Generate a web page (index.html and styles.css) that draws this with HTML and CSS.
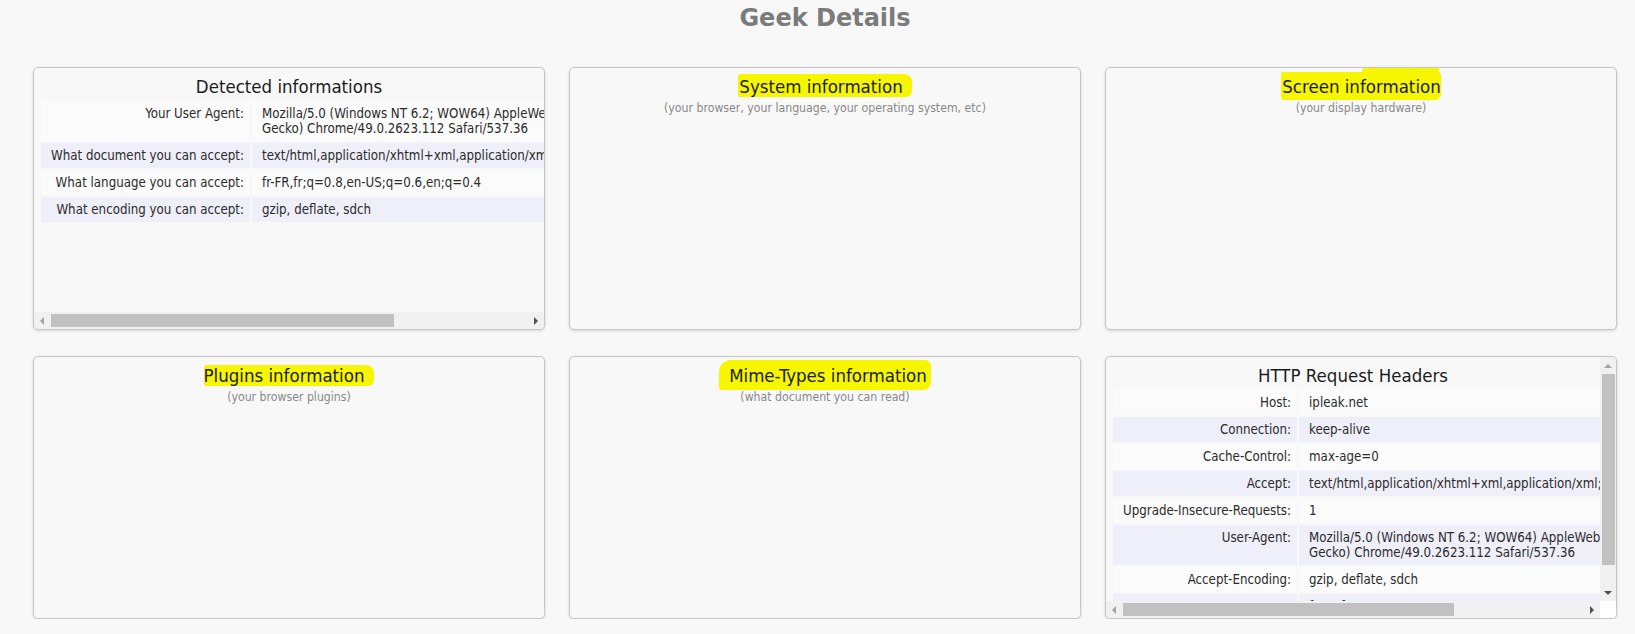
FILE: index.html
```html
<!DOCTYPE html>
<html lang="en">
<head>
<meta charset="utf-8">
<title>Geek Details</title>
<link rel="stylesheet" href="styles.css">
</head>
<body>
<div class="page">
  <h1 class="page-title">Geek Details</h1>
  <div class="grid">

    <section class="card card--hscroll">
      <div class="card-body">
        <h2 class="card-title">Detected informations</h2>
        <table class="info">
          <tr><th>Your User Agent:</th><td>Mozilla/5.0 (Windows NT 6.2; WOW64) AppleWebKit/537.36 (KHTML, like Gecko) Chrome/49.0.2623.112 Safari/537.36</td></tr>
          <tr><th>What document you can accept:</th><td>text/html,application/xhtml+xml,application/xml;q=0.9,image/webp,*/*;q=0.8</td></tr>
          <tr><th>What language you can accept:</th><td>fr-FR,fr;q=0.8,en-US;q=0.6,en;q=0.4</td></tr>
          <tr><th>What encoding you can accept:</th><td>gzip, deflate, sdch</td></tr>
        </table>
      </div>
      <div class="hscroll">
        <span class="sb-btn"><span class="arrow arrow-left"></span></span>
        <div class="sb-track"><div class="sb-thumb sb-thumb--h" style="width:72%"></div></div>
        <span class="sb-btn"><span class="arrow arrow-right"></span></span>
      </div>
    </section>

    <section class="card">
      <div class="card-body">
        <h2 class="card-title"><span class="hl hl-system">System information</span></h2>
        <p class="card-sub">(your browser, your language, your operating system, etc)</p>
      </div>
    </section>

    <section class="card">
      <div class="card-body">
        <h2 class="card-title"><span class="hl hl-screen">Screen information</span></h2>
        <p class="card-sub">(your display hardware)</p>
      </div>
    </section>

    <section class="card">
      <div class="card-body">
        <h2 class="card-title"><span class="hl hl-plugins">Plugins information</span></h2>
        <p class="card-sub">(your browser plugins)</p>
      </div>
    </section>

    <section class="card">
      <div class="card-body">
        <h2 class="card-title"><span class="hl hl-mime">Mime-Types information</span></h2>
        <p class="card-sub">(what document you can read)</p>
      </div>
    </section>

    <section class="card card--xyscroll">
      <div class="card-body">
        <h2 class="card-title">HTTP Request Headers</h2>
        <table class="info">
          <tr><th>Host:</th><td>ipleak.net</td></tr>
          <tr><th>Connection:</th><td>keep-alive</td></tr>
          <tr><th>Cache-Control:</th><td>max-age=0</td></tr>
          <tr><th>Accept:</th><td>text/html,application/xhtml+xml,application/xml;q=0.9,image/webp,*/*;q=0.8</td></tr>
          <tr><th>Upgrade-Insecure-Requests:</th><td>1</td></tr>
          <tr><th>User-Agent:</th><td>Mozilla/5.0 (Windows NT 6.2; WOW64) AppleWebKit/537.36 (KHTML, like Gecko) Chrome/49.0.2623.112 Safari/537.36</td></tr>
          <tr><th>Accept-Encoding:</th><td>gzip, deflate, sdch</td></tr>
          <tr><th>Accept-Language:</th><td>fr-FR,fr;q=0.8,en-US;q=0.6,en;q=0.4</td></tr>
        </table>
      </div>
      <div class="vscroll">
        <span class="sb-btn sb-btn--v"><span class="arrow arrow-up"></span></span>
        <div class="sb-track sb-track--v"><div class="sb-thumb sb-thumb--v" style="height:91%"></div></div>
        <span class="sb-btn sb-btn--v"><span class="arrow arrow-down"></span></span>
      </div>
      <div class="hscroll">
        <span class="sb-btn"><span class="arrow arrow-left"></span></span>
        <div class="sb-track"><div class="sb-thumb sb-thumb--h" style="width:72%"></div></div>
        <span class="sb-btn"><span class="arrow arrow-right"></span></span>
      </div>
      <div class="sb-corner"></div>
    </section>

  </div>
</div>
</body>
</html>
```

FILE: styles.css
```css
html, body {
  margin: 0;
  padding: 0;
}

body {
  background: #f8f8f8;
  font-family: "DejaVu Sans Condensed", "DejaVu Sans", sans-serif;
  font-stretch: condensed;
  color: #333;
}

.page {
  width: 1584px;
  margin-left: 33px;
}

.page-title {
  margin: 0 0 35px;
  padding-top: 4px;
  font-family: "DejaVu Sans", sans-serif;
  font-stretch: normal;
  font-size: 24px;
  line-height: 28px;
  font-weight: bold;
  color: #7b7b7b;
  text-align: center;
}

.grid {
  display: grid;
  grid-template-columns: repeat(3, 512px);
  grid-auto-rows: 263px;
  column-gap: 24px;
  row-gap: 26px;
}

.card {
  box-sizing: border-box;
  display: flex;
  flex-direction: column;
  border: 1px solid #c6c6c6;
  border-radius: 5px;
  background: #f8f8f8;
  box-shadow: 0 1px 3px rgba(0, 0, 0, 0.14);
  min-width: 0;
}

.card-body {
  flex: 1;
  min-height: 0;
  min-width: 0;
  overflow: hidden;
  border-radius: 5px 5px 0 0;
}

.card-title {
  margin: 0;
  padding-top: 8px;
  font-size: 18.5px;
  line-height: 22px;
  font-weight: normal;
  color: #1c1c1c;
  text-align: center;
  white-space: nowrap;
}

.card-sub {
  margin: 3px 0 0;
  font-size: 12.2px;
  line-height: 14px;
  color: #888;
  text-align: center;
}

/* highlighter marks */
.hl {
  background: #f6f600;
  border-radius: 3px 8px 6px 2px;
}

.hl-system {
  padding: 2px 9px 0 1px;
}

.hl-screen {
  position: relative;
  padding: 4px 0 3px 1px;
  border-radius: 2px 4px 6px 2px;
}

.hl-screen::before {
  content: "";
  position: absolute;
  top: -5px;
  right: 2px;
  width: 48%;
  height: 10px;
  background: #f6f600;
  border-radius: 10px 8px 0 14px;
}

.hl-plugins {
  padding: 0 10px 0 0;
}

.hl-mime {
  padding: 5px 4px 4px 10px;
  border-radius: 12px 6px 8px 3px;
}

/* tables */
.info {
  margin: 1px 0 0 5px;
  border-spacing: 2px;
  font-size: 13.2px;
  line-height: 15px;
}

.info th,
.info td {
  padding: 5px 10px;
  vertical-align: top;
  text-align: left;
  font-weight: normal;
  color: #2b2b2b;
}

.info th {
  padding-right: 6px;
  text-align: right;
  white-space: nowrap;
}

.info tr:nth-child(odd) th,
.info tr:nth-child(odd) td {
  background: #fbfbfb;
}

.info tr:nth-child(even) th,
.info tr:nth-child(even) td {
  background: #efeff9;
}

/* fake scrollbars */
.hscroll {
  flex: none;
  display: flex;
  height: 17px;
  background: #f1f1f1;
  border-radius: 0 0 4px 4px;
}

.sb-btn {
  flex: none;
  width: 17px;
  height: 17px;
  display: flex;
  align-items: center;
  justify-content: center;
}

.sb-track {
  flex: 1;
  display: flex;
  align-items: center;
}

.sb-thumb {
  background: #c1c1c1;
}

.sb-thumb--h {
  height: 13px;
}

.arrow {
  width: 0;
  height: 0;
  border: 4px solid transparent;
}

.arrow-left {
  border-left-width: 0;
  border-right-color: #a3a3a3;
  margin-left: -1px;
}

.arrow-right {
  border-right-width: 0;
  border-left-color: #505050;
  margin-left: 1px;
}

.arrow-up {
  border-top-width: 0;
  border-bottom-color: #a3a3a3;
}

.arrow-down {
  border-bottom-width: 0;
  border-top-color: #505050;
}

/* card with both scrollbars */
.card--xyscroll {
  display: grid;
  grid-template-columns: minmax(0, 1fr) 16px;
  grid-template-rows: minmax(0, 1fr) 17px;
}

.card--xyscroll .card-body {
  border-radius: 5px 0 0 0;
}

.card--xyscroll .hscroll {
  border-radius: 0 0 0 4px;
}

.vscroll {
  display: flex;
  flex-direction: column;
  background: #f1f1f1;
  border-radius: 0 4px 0 0;
}

.sb-btn--v {
  width: 16px;
}

.sb-track--v {
  flex-direction: column;
  align-items: center;
  justify-content: flex-start;
}

.sb-thumb--v {
  width: 13px;
}

.sb-corner {
  background: #ffffff;
  border-radius: 0 0 4px 0;
}
```
